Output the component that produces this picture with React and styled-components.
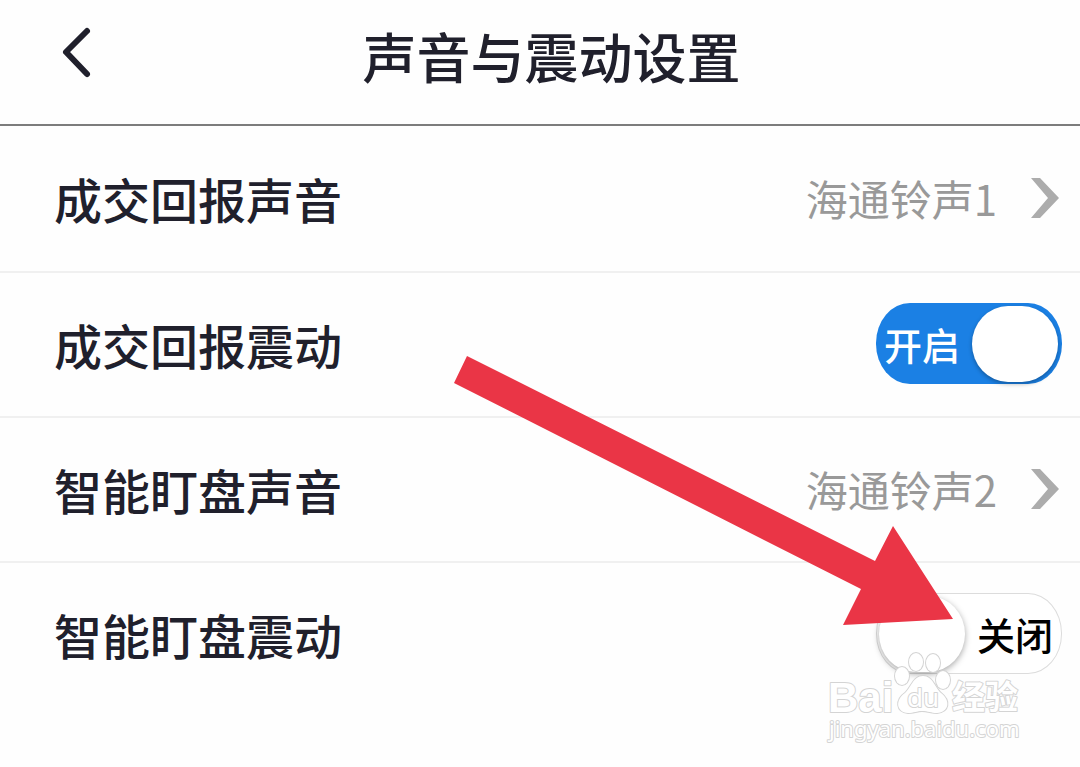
import React, { useState } from "react";
import styled, { createGlobalStyle, ThemeProvider } from "styled-components";

const theme = {
  color: {
    background: "#fefefe",
    text: "#20202c",
    muted: "#999999",
    chevron: "#acacac",
    headerLine: "#7c7c7c",
    rowLine: "#f0f0f0",
    primary: "#1b80e4",
    arrow: "#ea3546"
  },
  font: `"Noto Sans CJK SC", "Noto Sans", sans-serif`
};

const GlobalStyle = createGlobalStyle`
  * {
    box-sizing: border-box;
  }
  body {
    margin: 0;
    background: ${theme.color.background};
    color: ${theme.color.text};
    font-family: ${theme.font};
  }
  button {
    padding: 0;
    border: 0;
    background: none;
    color: inherit;
    font: inherit;
    cursor: pointer;
  }
`;

const Page = styled.div`
  position: relative;
  min-height: 100vh;
  overflow: hidden;
`;

const Header = styled.header`
  display: grid;
  grid-template-columns: 1fr auto 1fr;
  align-items: center;
  height: 126px;
  padding: 0 33px 12px 56px;
  border-bottom: 2px solid ${props => props.theme.color.headerLine};
`;

const BackButton = styled.button`
  display: flex;
  justify-self: start;
  padding-bottom: 8px;
`;

const Title = styled.h1`
  margin: 0;
  font-size: 54px;
  font-weight: 500;
  line-height: 64px;
`;

const List = styled.ul`
  margin: 0;
  padding: 0;
  list-style: none;
`;

const Row = styled.li`
  display: flex;
  align-items: center;
  justify-content: space-between;
  height: 145px;
  padding: 0 18px 2px 54px;
  & + & {
    border-top: 2px solid ${props => props.theme.color.rowLine};
  }
`;

const Label = styled.label`
  font-size: 48px;
  font-weight: 500;
  line-height: 64px;
`;

const ValueButton = styled.button`
  display: flex;
  align-items: center;
  gap: 34px;
  svg {
    margin-right: 3px;
  }
`;

const Value = styled.span`
  color: ${props => props.theme.color.muted};
  font-size: 42px;
  line-height: 64px;
`;

const SwitchBox = styled.label`
  display: flex;
  flex-direction: ${props => (props.$on ? "row" : "row-reverse")};
  align-items: center;
  justify-content: space-between;
  width: 186px;
  height: 81px;
  padding: ${props => (props.$on ? "0 4px 0 8px" : "0 8px 0 2px")};
  border: ${props => (props.$on ? "0" : "1px solid #dcdcdc")};
  border-radius: 34px / 40px;
  background: ${props => (props.$on ? props.theme.color.primary : "#ffffff")};
  color: ${props => (props.$on ? "#ffffff" : "#000000")};
  font-size: 38px;
  line-height: 56px;
  cursor: pointer;
  input {
    position: absolute;
    opacity: 0;
  }
`;

const SwitchText = styled.span`
  font-weight: 500;
`;

const Knob = styled.span`
  width: 86px;
  height: 76px;
  border-radius: 36px / 38px;
  background: #ffffff;
  box-shadow: ${props =>
    props.$on ? "0 2px 4px rgba(0, 0, 0, 0.3)" : "0 2px 6px rgba(0, 0, 0, 0.35)"};
`;

const Arrow = styled.svg`
  position: absolute;
  top: 350px;
  right: 120px;
  pointer-events: none;
`;

const Watermark = styled.svg`
  position: absolute;
  top: 645px;
  right: 50px;
  pointer-events: none;
  fill: #ffffff;
  stroke: #d4d4d4;
  stroke-width: 2px;
  stroke-linejoin: round;
  paint-order: stroke;
  font-family: "Noto Sans", "Noto Sans CJK SC", sans-serif;
`;

const Chevron = () => (
  <svg width="28" height="44" viewBox="0 0 28 44" aria-hidden="true">
    <path d="M0 2H9L28 22L9 42H0L17 22Z" fill={theme.color.chevron} />
  </svg>
);

const Switch = ({ id, defaultOn }) => {
  const [on, setOn] = useState(defaultOn);
  return (
    <SwitchBox $on={on}>
      <input
        id={id}
        type="checkbox"
        role="switch"
        checked={on}
        onChange={() => setOn(!on)}
      />
      <SwitchText>{on ? "开启" : "关闭"}</SwitchText>
      <Knob $on={on} />
    </SwitchBox>
  );
};

const settings = [
  { id: "deal-sound", label: "成交回报声音", value: "海通铃声1" },
  { id: "deal-vibration", label: "成交回报震动", on: true },
  { id: "watch-sound", label: "智能盯盘声音", value: "海通铃声2" },
  { id: "watch-vibration", label: "智能盯盘震动", on: false }
];

const App = () => {
  return (
    <ThemeProvider theme={theme}>
      <GlobalStyle />
      <Page>
        <Header>
          <BackButton type="button" aria-label="返回">
            <svg width="40" height="56" viewBox="0 0 40 56" fill="none">
              <path
                d="M31 7L10 28L31 50"
                stroke={theme.color.text}
                strokeWidth="6"
                strokeLinecap="round"
                strokeLinejoin="round"
              />
            </svg>
          </BackButton>
          <Title>声音与震动设置</Title>
        </Header>
        <List>
          {settings.map(({ id, label, value, on }) => (
            <Row key={id}>
              <Label htmlFor={id}>{label}</Label>
              {value ? (
                <ValueButton id={id} type="button">
                  <Value>{value}</Value>
                  <Chevron />
                </ValueButton>
              ) : (
                <Switch id={id} defaultOn={on} />
              )}
            </Row>
          ))}
        </List>
        <Arrow width="510" height="280" viewBox="450 350 510 280">
          <path
            d="M467 356L875 561L893 526L953 619L843 625L861 589L454 383Z"
            fill={theme.color.arrow}
          />
        </Arrow>
        <Watermark width="210" height="105" viewBox="820 645 210 105">
          <text
            x="828"
            y="712"
            fontSize="42"
            fontWeight="700"
            fontFamily="Liberation Sans"
          >
            Bai
          </text>
          <path d="M923 676C913 676 911 688 905 693C895 700 896 712 908 713C914 713 917 711 922 711C928 711 931 713 937 713C949 712 951 701 941 693C935 688 933 676 923 676Z" />
          <ellipse cx="902" cy="676" rx="7" ry="9" />
          <ellipse cx="916" cy="662" rx="7" ry="9" />
          <ellipse cx="933" cy="663" rx="7" ry="9" />
          <ellipse cx="943" cy="680" rx="7" ry="9" />
          <text x="907" y="707" fontSize="26">
            du
          </text>
          <text x="952" y="709" fontSize="33" fontWeight="700">
            经验
          </text>
          <text x="829" y="737" fontSize="22">
            jingyan.baidu.com
          </text>
        </Watermark>
      </Page>
    </ThemeProvider>
  );
};

export default App;
